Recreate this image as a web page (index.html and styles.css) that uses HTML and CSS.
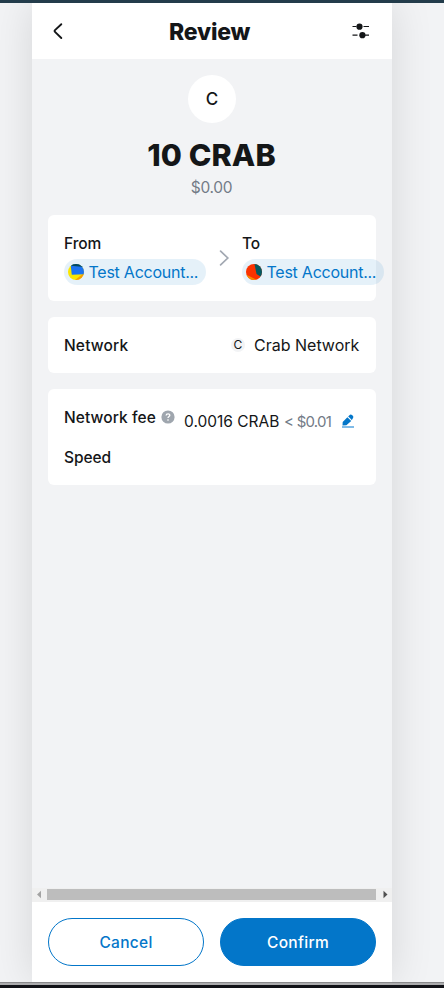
FILE: index.html
```
<!DOCTYPE html>
<html lang="en">
<head>
<meta charset="utf-8">
<title>Review</title>
<link rel="stylesheet" href="styles.css">
</head>
<body>
<div class="window">
  <main class="panel">
    <header class="header">
      <svg class="back" viewBox="0 0 16 20"><path d="M11.3 3.2 5 9.1Q4.1 10 5 10.9L11.3 17" fill="none" stroke="#141618" stroke-width="1.9" stroke-linecap="round"/></svg>
      <h1 class="title">Review</h1>
      <svg class="sliders" viewBox="0 0 20 20"><path d="M1.5 5.5h4M12.5 5.5h5.5M1.5 14.2h5M12 14.2h6" stroke="#141618" stroke-width="1.2"/><circle cx="8.5" cy="5.7" r="3.1" fill="#141618"/><circle cx="11.4" cy="14.2" r="3.1" fill="#141618"/></svg>
    </header>
    <section class="content">
      <div class="token">C</div>
      <div class="amount">10 CRAB</div>
      <div class="fiat">$0.00</div>
      <div class="card accounts">
        <div class="party">
          <span class="label from">From</span>
          <span class="pill"><svg class="avatar" viewBox="0 0 16 16"><clipPath id="a"><circle cx="8" cy="8" r="8"/></clipPath><g clip-path="url(#a)"><path fill="#fae600" d="M0 0h16v16H0z"/><path fill="#f99d00" d="M7 16 16 9v7z"/><path fill="#1b73f0" d="M2.5 0H16v10.2L3.8 10.8z"/><path fill="#03495a" d="M2 0h14v3L3 1.8z"/></g></svg><span class="account">Test Account...</span></span>
        </div>
        <svg class="arrow" viewBox="0 0 12 18"><path d="M2.6 2.2 9.8 9 2.6 15.8" fill="none" stroke="#a2a8b2" stroke-width="1.7" stroke-linecap="round"/></svg>
        <div class="party">
          <span class="label to">To</span>
          <span class="pill"><svg class="avatar" viewBox="0 0 16 16"><clipPath id="b"><circle cx="8" cy="8" r="8"/></clipPath><g clip-path="url(#b)"><path fill="#fa3200" d="M0 0h16v16H0z"/><path fill="#035961" d="M8.5 0H16v13.5L10.5 10z"/><path fill="#f78a00" d="M0 10.5 11 16H0z"/></g></svg><span class="account">Test Account...</span></span>
        </div>
      </div>
      <div class="card network">
        <span class="label network-label">Network</span>
        <span class="network-value"><span class="network-icon">C</span><span class="network-name">Crab Network</span></span>
      </div>
      <div class="card fee">
        <div class="fee-row">
          <span class="label fee-label">Network fee</span>
          <svg class="help" viewBox="0 0 14 14"><circle cx="7" cy="7" r="6.6" fill="#9fa6ae"/><path d="M5.1 5.5C5.2 3.2 9 3.3 8.8 5.4 8.7 6.6 7 6.6 7 8.1M7 9.3v1.4" fill="none" stroke="#fff" stroke-width="1.3"/></svg>
          <span class="fee-value">0.0016 CRAB</span>
          <span class="fee-fiat">&lt; $0.01</span>
          <svg class="edit" viewBox="0 0 14 14"><path fill="#80bbe7" d="M1 12h12v2H1z"/><path fill="#0376c9" d="M1.5 11.5 1.7 8 6.4 3.2 10.2 6.9 5.4 11.2zM7.1 2.5 9 .7Q10 0 11 1L12 2.1Q12.8 3 12 4.1L10.8 6.2z"/><path d="m7.2 3 3.5 3.3" stroke="#fff" stroke-width=".7"/></svg>
        </div>
        <span class="label speed">Speed</span>
      </div>
    </section>
    <div class="scrollbar">
      <svg class="scroll-arrow" viewBox="0 0 15 13"><path d="m5 6.5 4-3.7v7.4z" fill="#a3a3a3"/></svg>
      <div class="thumb"></div>
      <svg class="scroll-arrow" viewBox="0 0 15 13"><path d="m10.5 6.5-4-3.7v7.4z" fill="#505050"/></svg>
    </div>
    <footer class="footer">
      <button class="button cancel">Cancel</button>
      <button class="button confirm">Confirm</button>
    </footer>
  </main>
</div>
</body>
</html>
```

FILE: styles.css
```
* { box-sizing: border-box; }
body { margin: 0; background: #f2f3f5; color: #141618; font: 16px/22px Inter, sans-serif; }
.window { height: 988px; padding: 0 52px 0 32px; border-top: 3px solid #233c4b; border-bottom: 3px solid #111217; overflow: hidden; display: flex; flex-direction: column; }
.window::after { content: ""; flex: none; height: 3px; margin: 0 -52px 0 -32px; background: linear-gradient(#89898b 1px, #ababad 1px); position: relative; }
.panel { flex: 1; display: flex; flex-direction: column; width: 360px; background: #f2f3f5; box-shadow: 0 0 40px rgba(0, 0, 0, .12); }
.header { height: 56px; flex: none; display: flex; align-items: center; justify-content: space-between; padding: 0 21px 0 18px; background: #fff; }
.back { width: 16px; height: 20px; }
.title { margin: 1px 0 0 4px; width: 83px; font-size: 23px; line-height: 32px; font-weight: 800; letter-spacing: -.2px; white-space: nowrap; }
.sliders { width: 20px; height: 20px; }
.content { flex: 1; padding: 16px; display: flex; flex-direction: column; }
.token { align-self: center; width: 48px; height: 48px; border-radius: 50%; background: #fff; font-size: 17px; line-height: 48px; text-align: center; font-weight: 500; }
.amount { margin: 11px 1px 0 0; font-size: 30.5px; line-height: 42px; font-weight: 800; text-align: center; letter-spacing: .1px; }
.fiat { margin: 0 1px 16px 0; line-height: 23px; font-size: 15.5px; color: #737b87; text-align: center; letter-spacing: -.3px; }
.card { background: #fff; border-radius: 6px; padding: 16px; margin-bottom: 16px; flex: none; }
.label { font-weight: 500; font-size: 15.5px; letter-spacing: -.1px; white-space: nowrap; }
.accounts { height: 86px; display: flex; }
.party { flex: none; width: 142px; display: flex; flex-direction: column; padding-top: 2px; }
.pill { height: 26px; margin-top: 4px; display: flex; align-items: center; gap: 5px; padding-left: 4px; border-radius: 13px; background: rgba(3, 118, 201, .1); color: #0376c9; }
.avatar { width: 16px; height: 16px; flex: none; }
.account { white-space: nowrap; letter-spacing: -.25px; margin-left: -.5px; }
.arrow { width: 12px; height: 18px; margin: 18px 12px 0; flex: none; }
.network { height: 56px; display: flex; align-items: center; justify-content: space-between; }
.network-label { letter-spacing: .15px; padding-top: 1px; }
.network-value { display: flex; align-items: center; gap: 9px; }
.network-icon { width: 14px; height: 14px; border-radius: 50%; background: #f2f3f5; font-size: 12px; line-height: 14px; text-align: center; }
.network-name { width: 106px; white-space: nowrap; letter-spacing: 0; }
.fee { height: 96px; display: flex; flex-direction: column; justify-content: space-between; }
.fee-row { display: flex; height: 32px; padding-top: 1px; white-space: nowrap; }
.fee-label { width: 93px; padding-top: 1px; letter-spacing: .08px; }
.help { width: 14px; height: 14px; margin: 4px 9px 0 4px; flex: none; }
.fee-value, .fee-fiat { margin-top: 5px; font-size: 15.5px; line-height: 22px; flex: none; }
.fee-value { width: 100px; }
.fee-fiat { width: 48px; color: #737b87; font-size: 15px; letter-spacing: -.75px; }
.edit { width: 14px; height: 14px; margin: 8px 0 0 9px; flex: none; }
.speed { margin-bottom: 0; }
.scrollbar { height: 14px; flex: none; display: flex; align-items: flex-start; background: #f0f0f0; }
.scroll-arrow { width: 15px; height: 13px; flex: none; }
.thumb { flex: 1; height: 11px; background: #bdbdbd; margin: 1px 1px 0 0; }
.footer { height: 80px; flex: none; padding: 16px; display: flex; gap: 16px; background: #fff; }
.button { flex: 1; border: 1px solid #0376c9; border-radius: 24px; font: 500 15.5px/22px Inter, sans-serif; background: #fff; color: #0376c9; padding: 2px 0 0; letter-spacing: .3px; }
.button.confirm { background: #0376c9; color: #fff; }
```
